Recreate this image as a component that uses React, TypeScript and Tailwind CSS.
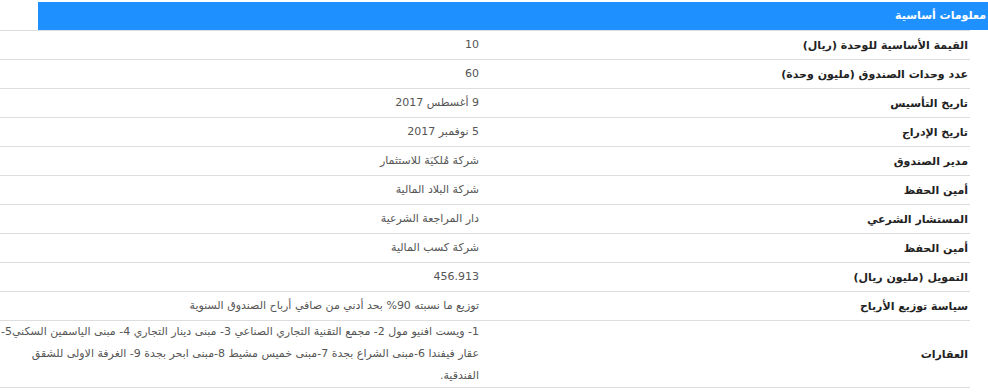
const rows: { label: string; value: string }[] = [
  { label: "القيمة الأساسية للوحدة (ريال)", value: "10" },
  { label: "عدد وحدات الصندوق (مليون وحدة)", value: "60" },
  { label: "تاريخ التأسيس", value: "9 أغسطس 2017" },
  { label: "تاريخ الإدراج", value: "5 نوفمبر 2017" },
  { label: "مدير الصندوق", value: "شركة مُلكيَة للاستثمار" },
  { label: "أمين الحفظ", value: "شركة البلاد المالية" },
  { label: "المستشار الشرعي", value: "دار المراجعة الشرعية" },
  { label: "أمين الحفظ", value: "شركة كسب المالية" },
  { label: "التمويل (مليون ريال)", value: "456.913" },
  {
    label: "سياسة توزيع الأرباح",
    value: "توزيع ما نسبته 90% بحد أدني من صافي أرباح الصندوق السنوية",
  },
  {
    label: "العقارات",
    value:
      "1- ويست افنيو مول 2- مجمع التقنية التجاري الصناعي 3- مبنى دينار التجاري 4- مبنى الياسمين السكني5- عقار فيفندا 6-مبنى الشراع بجدة 7-مبنى خميس مشيط 8-مبنى ابحر بجدة 9- الغرفة الاولى للشقق الفندقية.",
  },
];

export default function App() {
  return (
    <div
      className="w-[988px] h-[392px] overflow-hidden bg-white"
      style={{ fontFamily: '"DejaVu Sans", sans-serif' }}
    >
      <div
        dir="rtl"
        className="ml-[38px] mt-[2px] h-[28px] bg-[#1e90ff] flex items-center pr-[2px] text-[11px] font-bold text-white"
      >
        معلومات أساسية
      </div>

      <div dir="rtl" className="w-[970px] border-t border-[#dddddd]">
        {rows.map((r, i) => {
          const multi = i === rows.length - 1;
          return (
            <div key={i} className="flex border-b border-[#dddddd]">
              <div className="w-[485px] shrink-0 flex items-center pr-[2px] pt-[5px] pb-[3px] text-[11px] leading-[20px] font-bold text-[#222]">
                {r.label}
              </div>
              <div
                className={
                  multi
                    ? "flex-1 pr-[6px] py-0 text-[11px] leading-[22px] text-[#555]"
                    : "flex-1 pr-[6px] py-[4px] text-[11px] leading-[20px] text-[#555]"
                }
              >
                {r.value}
              </div>
            </div>
          );
        })}
      </div>
    </div>
  );
}
